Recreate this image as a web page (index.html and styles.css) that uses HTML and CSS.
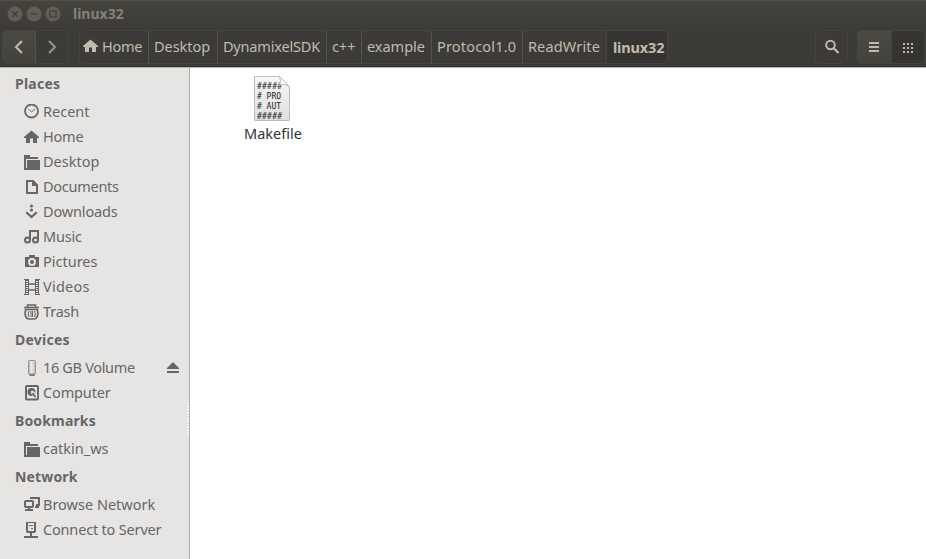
FILE: index.html
```html
<!DOCTYPE html>
<html lang="en">
<head>
<meta charset="utf-8">
<title>linux32</title>
<link rel="stylesheet" href="styles.css">
</head>
<body>
<svg class="defs" width="0" height="0" aria-hidden="true">
  <symbol id="home" viewBox="0 0 16 16"><path fill="currentColor" d="M7.500 1.500 0 8v1h2v5h4V9.500h3V14h4V9h2V8z"/></symbol>
  <symbol id="folder" viewBox="0 0 16 16"><path fill="currentColor" d="M0 1h6v2h8v2H2v9h1V6h13v10H0z"/></symbol>
</svg>
<div class="window">
  <header class="chrome">
    <div class="titlebar">
      <svg class="controls" width="54" height="16" viewBox="0 0 54 16">
        <g fill="#605e57"><circle cx="8" cy="8" r="7.5"/><circle cx="27" cy="8" r="7.5"/><circle cx="46" cy="8" r="7.5"/></g>
        <path d="m5.500 5.500 5 5m0-5-5 5M23.500 8h7M43 5h6v6h-6z" fill="none" stroke="#3c3b37" stroke-width="1.200"/>
      </svg>
      <h1>linux32</h1>
    </div>
    <nav class="toolbar">
      <div class="group nav">
        <button class="raised"><svg width="16" height="16" viewBox="0 0 16 16"><path d="M11 2 5 8l6 6" fill="none" stroke="#bcb8ac" stroke-width="2.2"/></svg></button>
        <button><svg width="16" height="16" viewBox="0 0 16 16"><path d="m5 2 6 6-6 6" fill="none" stroke="#929087" stroke-width="2.2"/></svg></button>
      </div>
      <div class="group path">
        <button class="p-home"><svg width="16" height="16"><use href="#home"/></svg><span>Home</span></button>
        <button class="p-desktop"><span>Desktop</span></button>
        <button class="p-sdk"><span>DynamixelSDK</span></button>
        <button class="p-cpp"><span>c++</span></button>
        <button class="p-example"><span>example</span></button>
        <button class="p-protocol"><span>Protocol1.0</span></button>
        <button class="p-rw"><span>ReadWrite</span></button>
        <button class="p-current pressed"><span>linux32</span></button>
      </div>
      <div class="group search"><button><svg width="16" height="16" viewBox="0 0 16 16" fill="none" stroke="#bcb8ac"><circle cx="6.5" cy="6" r="4.3" stroke-width="2"/><path d="m9.5 9 5 5" stroke-width="2.3"/></svg></button></div>
      <div class="group views">
        <button class="raised"><svg width="16" height="16" viewBox="0 0 16 16"><path fill="#bcb8ac" d="M3 3h10v2H3zm0 4h10v2H3zm0 4h10v2H3z"/></svg></button>
        <button class="pressed"><svg width="16" height="16" viewBox="0 0 16 16"><path fill="#bcb8ac" d="M3 4h2v2H3zm4 0h2v2H7zm4 0h2v2h-2zM3 8h2v2H3zm4 0h2v2H7zm4 0h2v2h-2zM3 12h2v2H3zm4 0h2v2H7zm4 0h2v2h-2z"/></svg></button>
      </div>
    </nav>
  </header>
  <main class="content">
    <aside class="sidebar">
      <h2 class="h-places">Places</h2>
      <div class="item i-recent"><svg width="16" height="16" viewBox="0 0 16 16" fill="none" stroke="currentColor"><circle cx="7.5" cy="7" r="6.500" stroke-width="1.8"/><path d="m4.500 5 3 3 3.500-3"/></svg><span>Recent</span></div>
      <div class="item i-home"><svg width="16" height="16"><use href="#home"/></svg><span>Home</span></div>
      <div class="item i-desktop"><svg width="16" height="16"><use href="#folder"/></svg><span>Desktop</span></div>
      <div class="item i-documents"><svg width="16" height="16" viewBox="0 0 16 16"><path d="M3 2h6l4 4v8H3z" fill="none" stroke="currentColor" stroke-width="2"/><path fill="currentColor" d="M8 2h2l4 4v1H8z"/></svg><span>Documents</span></div>
      <div class="item i-downloads"><svg width="16" height="16" viewBox="0 0 16 16" fill="currentColor"><circle cx="7.500" cy="2" r="1.600"/><circle cx="7.500" cy="6" r="1.600"/><path d="m3 7.500 4.500 4 4.500-4 1.500 1.500-6 5.500-6-5.500z"/></svg><span>Downloads</span></div>
      <div class="item i-music"><svg width="16" height="16" viewBox="0 0 16 16" fill="none" stroke="currentColor" stroke-width="2"><path d="M6 11V2h8v9M5 2h10"/><circle cx="3.500" cy="11" r="2.500"/><circle cx="11.500" cy="11" r="2.500"/></svg><span>Music</span></div>
      <div class="item i-pictures"><svg width="16" height="16" viewBox="0 0 16 16"><path fill="currentColor" fill-rule="evenodd" d="M5 1h6v2h4v10H1V3h4zM8 4a4 4 0 1 0 0 8 4 4 0 0 0 0-8m0 2a2 2 0 1 1 0 4 2 2 0 0 1 0-4"/></svg><span>Pictures</span></div>
      <div class="item i-videos"><svg width="16" height="16" viewBox="0 0 16 16" fill="none" stroke="currentColor"><path d="M1.500 0v16M4.500 0v16M11.500 0v16M14.500 0v16M0 .500h5M11 .500h5M0 15.500h5M11 15.500h5"/><path d="M3 1v14M13 1v14" stroke-width="2" stroke-dasharray="1 1"/><path d="M5 5h6M5 11h6" stroke-width="1.500"/></svg><span>Videos</span></div>
      <div class="item i-trash"><svg width="16" height="16" viewBox="0 0 16 16" fill="none" stroke="currentColor"><path d="M3.500 3V1h8v2M0 3.500h15" stroke-width="1.600"/><path d="M1.500 5v2q-1 3 .500 6 1 2 3 2h5q2 0 3-2 1.500-3 .500-6V5M1 5.500h13" stroke-width="1.700"/><path d="M5 7q-1.500 3 0 6M7 7v6M8.500 7v6M10.500 7q1.500 3 0 6"/></svg><span>Trash</span></div>
      <h2 class="h-devices">Devices</h2>
      <div class="item i-volume"><svg width="16" height="16" viewBox="0 0 16 16"><defs><linearGradient id="usb"><stop stop-color="#b0b0b0"/><stop offset=".4" stop-color="#eee"/><stop offset="1" stop-color="#bbb"/></linearGradient></defs><path fill="#777" d="M5 14h6v1l-1 1H6l-1-1z"/><rect x="4.500" y=".500" width="7" height="13.500" rx="1" fill="url(#usb)" stroke="#929292"/></svg><span>16 GB Volume</span><svg class="eject" width="12" height="12" viewBox="0 0 12 12"><path fill="currentColor" d="m6 0 6 6v1H0V6zM0 9h12v2H0z"/></svg></div>
      <div class="item i-computer"><svg width="16" height="16" viewBox="0 0 16 16"><rect x="2" y="1" width="12" height="13.500" rx="1" fill="none" stroke="currentColor" stroke-width="2"/><circle cx="7.500" cy="7" r="4" fill="currentColor"/><path d="m8 7 4.500 5" stroke="#e6e5e3" stroke-width="3.500"/><path d="m8 7.500 3.500 4.500" stroke="currentColor" stroke-width="2"/><circle cx="8" cy="7" r="1.200" fill="#e6e5e3"/></svg><span>Computer</span></div>
      <h2 class="h-bookmarks">Bookmarks</h2>
      <div class="item i-catkin"><svg width="16" height="16"><use href="#folder"/></svg><span>catkin_ws</span></div>
      <h2 class="h-network">Network</h2>
      <div class="item i-browse"><svg width="16" height="16" viewBox="0 0 16 16" fill="none" stroke="currentColor" stroke-width="2"><path d="M7 2V1h8v7h-3M11 10h4"/><rect x="1" y="4" width="8" height="6" rx="1"/><path d="M5 10v3M1 13h8"/></svg><span>Browse Network</span></div>
      <div class="item i-connect"><svg width="16" height="16" viewBox="0 0 16 16" fill="none" stroke="currentColor" stroke-width="2"><rect x="3" y="0" width="8" height="10" rx="1"/><path d="M7 10v4M0 15h14"/><path d="M5 3.500h4M7 6.500h2" stroke-width="1"/></svg><span>Connect to Server</span></div>
      <i class="grip"></i>
    </aside>
    <section class="files">
      <figure class="file">
        <svg width="40" height="47" viewBox="0 0 40 47">
          <defs><linearGradient id="paper" x2="0" y2="1"><stop stop-color="#f8f8f8"/><stop offset="1" stop-color="#dedede"/></linearGradient></defs>
          <path d="M1.500 1.500h25l10 10v34h-35z" fill="url(#paper)" stroke="#bcbcbc"/>
          <g class="preview"><text x="4" y="14" textLength="25">#####</text><text x="4" y="24" textLength="24">#&#160;PRO</text><text x="4" y="34" textLength="24">#&#160;AUT</text><text x="4" y="44" textLength="25">#####</text></g>
          <path d="M26.500 1.500q2 5 0 8 5-1 10 2z" fill="#fafafa" stroke="#bcbcbc"/>
        </svg>
        <figcaption>Makefile</figcaption>
      </figure>
    </section>
  </main>
</div>
</body>
</html>
```
FILE: styles.css
```css
* { box-sizing: border-box; }
body { margin: 0; font: 14.5px/25px "Noto Sans", "Open Sans", sans-serif; background: #fff; }
h1, h2, figure { margin: 0; }
svg { display: block; flex: none; }
.defs { position: absolute; }
.window { width: 926px; height: 559px; overflow: hidden; display: flex; flex-direction: column; }
.chrome { height: 68px; flex: none; background: linear-gradient(#44433e, #3c3b37 30px); border-top: 1px solid #504e49; border-bottom: 1px solid #b5b3af; box-shadow: inset 0 -1px #2f2e2a; }
.titlebar { height: 29px; display: flex; align-items: center; padding: 0 0 4px 7px; }
.titlebar h1 { margin-left: 12px; font-size: 14px; color: #83817a; line-height: 25px; }
.toolbar { height: 34px; display: flex; padding: 0 1px 0 2px; }
.group { height: 34px; display: flex; border: 1px solid #45443f; border-radius: 5px; overflow: hidden; }
.nav { width: 67px; margin-right: 10px; }
.path { width: 590px; }
.search { width: 33px; margin-left: 147px; }
.views { width: 68px; margin-left: 9px; }
button { flex: 1; display: flex; align-items: center; justify-content: center; padding: 0; border: 0; border-left: 1px solid #53524c; background: transparent; color: #c0bcae; font: inherit; white-space: nowrap; }
button:first-child { border-left: 0; }
.raised { background: linear-gradient(#4a4943, #43423d); }
.pressed { background: #353430; border-left-color: #45443f; }
.path button { flex: none; justify-content: flex-start; padding: 0 0 2px 5px; }
.path .p-home { width: 68px; gap: 3px; padding-left: 3px; letter-spacing: -.25px; }
.p-desktop { width: 69px; }
.p-sdk { width: 109px; letter-spacing: -.17px; }
.p-cpp { width: 35px; }
.p-example { width: 70px; }
.p-protocol { width: 91px; letter-spacing: .2px; }
.p-rw { width: 84px; letter-spacing: .15px; }
.path .p-current { width: 62px; font-weight: 700; padding: 0 0 0 6px; letter-spacing: -.15px; }
.content { flex: 1; display: flex; min-height: 0; }
.sidebar { position: relative; width: 190px; background: #e6e5e3; border-right: 1px solid #aeaca8; color: #666; }
.sidebar h2 { height: 31px; padding-left: 15px; font-size: 14px; line-height: 31px; white-space: nowrap; letter-spacing: .15px; }
.sidebar .h-places, .sidebar .h-devices { letter-spacing: .25px; }
.item { height: 25px; display: flex; align-items: center; padding-left: 24px; white-space: nowrap; }
.item > span { margin-left: 3px; }
.i-home, .i-music, .i-trash { letter-spacing: -.2px; }
.i-documents { letter-spacing: -.27px; }
.i-downloads, .i-computer { letter-spacing: -.14px; }
.i-videos { letter-spacing: .25px; }
.i-volume { letter-spacing: -.33px; }
.i-connect { letter-spacing: -.18px; }
.eject { margin: 0 10px 0 auto; }
.grip { position: absolute; right: 0; top: 335px; width: 2px; height: 32px; background: repeating-linear-gradient(#fff 0 1px, transparent 1px 3px); }
.files { flex: 1; padding: 7px 0 0 43px; }
.file { width: 80px; display: flex; flex-direction: column; align-items: center; color: #333; }
.file figcaption { margin-top: -1px; }
.preview { font: 8px "DejaVu Sans Mono", monospace; fill: #222; }
```
